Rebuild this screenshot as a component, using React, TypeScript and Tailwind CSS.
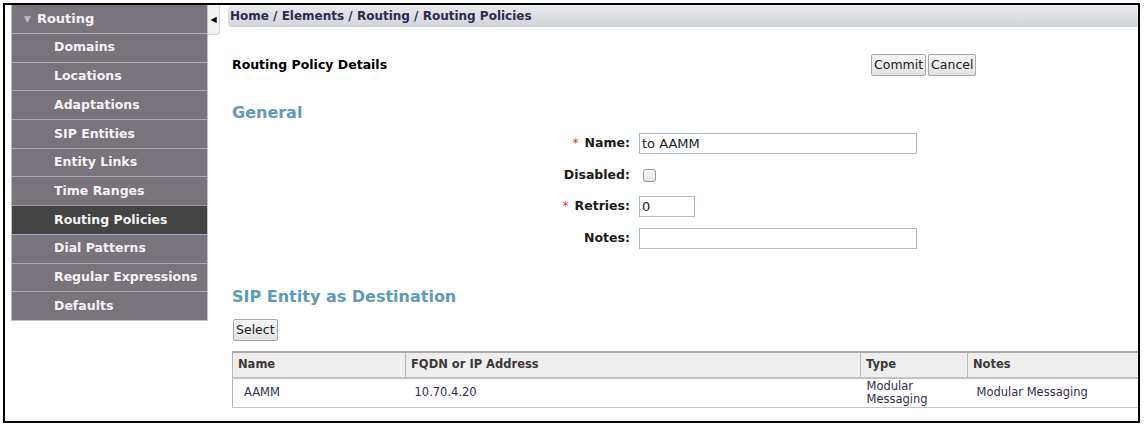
const menuItems = [
  "Domains",
  "Locations",
  "Adaptations",
  "SIP Entities",
  "Entity Links",
  "Time Ranges",
  "Routing Policies",
  "Dial Patterns",
  "Regular Expressions",
  "Defaults",
];

const ACTIVE = "Routing Policies";

function Sidebar() {
  return (
    <div className="w-[197px] shrink-0 border-x border-b border-[#c4c2c6] self-start">
      <div className="h-[28px] bg-[#79737b] flex items-center pl-[12px] gap-[6px]">
        <span className="text-[9px] text-[#bdb9c0] leading-none">▼</span>
        <span className="text-[13px] font-bold text-[#f4f2f6]">Routing</span>
      </div>
      {menuItems.map((item) => (
        <div
          key={item}
          className={
            item === ACTIVE
              ? "h-[28.7px] border-t border-[#9b979e] bg-[#444444] flex items-center pl-[42px] text-[12.5px] font-bold text-[#f4f4f4]"
              : "h-[28.7px] border-t border-[#aeaab1] bg-[#79737b] flex items-center pl-[42px] text-[12.5px] font-bold text-[#f4f2f6]"
          }
        >
          {item}
        </div>
      ))}
    </div>
  );
}

function Btn({ label }: { label: string }) {
  return (
    <button className="h-[22px] px-[2px] border border-[#a8a8a8] rounded-[2px] bg-gradient-to-b from-[#f6f6f6] to-[#e2e2e2] text-[12.5px] text-[#222] leading-none">
      {label}
    </button>
  );
}

function Field({ label, required, children }: { label: string; required?: boolean; children: React.ReactNode }) {
  return (
    <div className="flex items-center h-[21px]">
      <div className="w-[407px] text-right pr-[9px] text-[12.5px] font-bold text-[#1a1a1a]">
        {required && <span className="text-[#e0383a] font-normal mr-[6px] text-[12px]">*</span>}
        {label}
      </div>
      {children}
    </div>
  );
}

export default function App() {
  return (
    <div className="w-[1146px] h-[430px] bg-white pt-[3px] pl-[3px] font-['DejaVu_Sans',Verdana,sans-serif]">
      <div className="w-[1137px] h-[420px] border-2 border-black flex overflow-hidden">
        <div className="pl-[6px] flex shrink-0">
          <Sidebar />
          <div className="w-[12px] h-[30px] bg-[#f3f3f3] border-r border-b border-[#d6d6d6] rounded-br-[4px] flex items-center justify-center">
            <span className="text-[8px] text-black leading-none">◀</span>
          </div>
        </div>

        <div className="flex-1 pl-[8px] min-w-0">
          <div className="h-[22px] rounded-tl-[4px] rounded-bl-[4px] bg-gradient-to-b from-[#e8eaec] to-[#d2d5d8] flex items-center pl-[2px] text-[12px] font-bold text-[#2f2a4f]">
            Home / Elements / Routing / Routing Policies
          </div>

          <div className="pl-[4px]">
            <div className="flex items-center mt-[27px]">
              <div className="w-[639px] text-[12.5px] font-bold text-black">Routing Policy Details</div>
              <div className="flex gap-[2px]">
                <Btn label="Commit" />
                <Btn label="Cancel" />
              </div>
            </div>

            <div className="mt-[27px] h-[20px] leading-[20px] text-[16px] font-bold text-[#5d9bb8]">General</div>

            <div className="mt-[10px] flex flex-col gap-[10.5px]">
              <Field label="Name:" required>
                <input
                  defaultValue="to AAMM"
                  className="w-[278px] h-[21px] border border-[#a5bdd2] px-[2px] text-[13px] text-[#222] outline-none"
                />
              </Field>
              <Field label="Disabled:">
                <span className="ml-[4px] w-[13px] h-[13px] rounded-[3px] border border-[#9a9a9a] bg-gradient-to-b from-[#fdfdfd] to-[#e4e4e4]" />
              </Field>
              <Field label="Retries:" required>
                <input
                  defaultValue="0"
                  className="w-[56px] h-[21px] border border-[#a5bdd2] px-[2px] text-[13px] text-[#222] outline-none"
                />
              </Field>
              <Field label="Notes:">
                <input className="w-[278px] h-[21px] border border-[#a5bdd2] px-[2px] text-[13px] outline-none" />
              </Field>
            </div>

            <div className="mt-[38px] h-[20px] leading-[20px] text-[16px] font-bold text-[#5d9bb8]">
              SIP Entity as Destination
            </div>

            <div className="mt-[10px] pl-[1px]">
              <Btn label="Select" />
            </div>

            <table className="mt-[10px] w-full border-collapse border-l border-[#b4b4b4] text-[11.5px]">
              <thead>
                <tr className="h-[26px] bg-[#eeeeee] border-t-2 border-t-[#a8a8a8] border-b-2 border-b-[#c2c2c2] text-left text-[#3c3838]">
                  <th className="w-[173px] pl-[5px] font-bold border-r border-[#b4b4b4]">Name</th>
                  <th className="w-[455px] pl-[5px] font-bold border-r border-[#b4b4b4]">FQDN or IP Address</th>
                  <th className="w-[107px] pl-[5px] font-bold border-r border-[#b4b4b4]">Type</th>
                  <th className="pl-[5px] font-bold">Notes</th>
                </tr>
              </thead>
              <tbody>
                <tr className="h-[30px] border-b border-[#c4c4c4] text-[#33304a]">
                  <td className="pl-[11px]">AAMM</td>
                  <td className="pl-[9px]">10.70.4.20</td>
                  <td className="pl-[6px] leading-[13px]">
                    Modular
                    <br />
                    Messaging
                  </td>
                  <td className="pl-[9px]">Modular Messaging</td>
                </tr>
              </tbody>
            </table>
          </div>
        </div>
      </div>
    </div>
  );
}
